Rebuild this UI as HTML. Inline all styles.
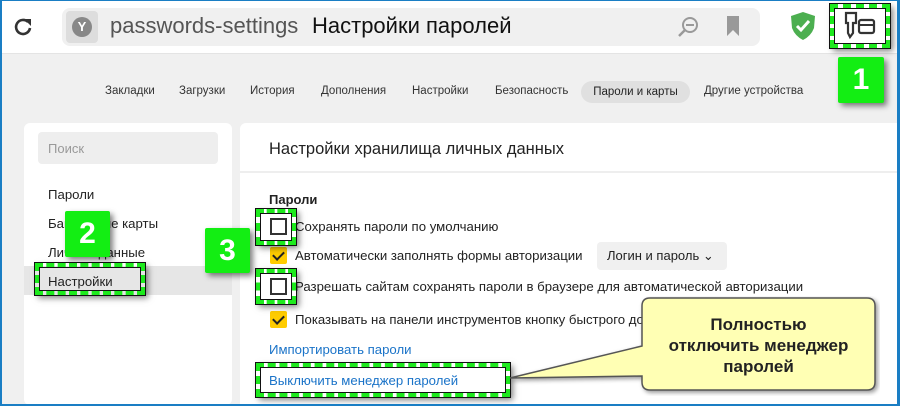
<!DOCTYPE html>
<html><head><meta charset="utf-8"><style>
*{margin:0;padding:0;box-sizing:border-box}
body{width:900px;height:406px;overflow:hidden;background:#f0f0f0;font-family:"Liberation Sans","DejaVu Sans",sans-serif;position:relative;color:#222}
.a{position:absolute;white-space:nowrap}
.frame{position:absolute;left:0;top:0;width:900px;height:406px;border:1px solid #1a7ec4;border-left-width:2px;border-right-width:3px;border-bottom-width:2px;z-index:50;pointer-events:none}
.dash{position:absolute;border:4px dashed #1eea1e;box-shadow:0 0 0 1px #111,3px 3px 6px rgba(0,0,0,.5),inset 0 0 0 1px #111;z-index:20}
.gbox{position:absolute;background:#13ee13;color:#fff;font-weight:bold;font-size:30px;text-align:center;box-shadow:3px 3px 6px rgba(0,0,0,.5);z-index:21;border-radius:2px}
.cb{position:absolute;width:17px;height:17px;background:#fc0;border-radius:2px}
.cb:after{content:"";position:absolute;left:5px;top:2px;width:5px;height:9px;border:solid #222;border-width:0 2px 2px 0;transform:rotate(45deg)}
.cbe{position:absolute;width:17px;height:17px;border:2px solid #333;background:#fff}
.t{font-size:13.2px;color:#222}
</style></head><body>
<div class="a" style="left:0;top:0;width:900px;height:54px;background:#fff;border-bottom:1px solid #e4e4e4"></div>
<svg class="a" style="left:12px;top:16px" width="22" height="22" viewBox="0 0 22 22"><path d="M16 6 A7 7 0 1 0 18 12" fill="none" stroke="#333" stroke-width="2.6"/><path d="M12 3 L19 3 L19 10 Z" fill="#333"/></svg>
<div class="a" style="left:62px;top:8px;width:698px;height:38px;background:#f0f0f0;border-radius:8px"></div>
<div class="a" style="left:66px;top:11px;width:32px;height:32px;background:#ddd;border-radius:4px"></div>
<div class="a" style="left:72px;top:17px;width:20px;height:20px;background:#888;border-radius:50%;color:#fff;font-size:13px;text-align:center;line-height:20px;font-weight:bold">Y</div>
<div class="a" style="left:110px;top:13px;font-size:22px;color:#555">passwords-settings</div>
<div class="a" style="left:312px;top:13px;font-size:22px;color:#111">Настройки паролей</div>
<svg class="a" style="left:676px;top:15px" width="24" height="24" viewBox="0 0 24 24"><circle cx="14" cy="10" r="7" fill="none" stroke="#999" stroke-width="2"/><line x1="10" y1="10" x2="18" y2="10" stroke="#999" stroke-width="2"/><line x1="9" y1="15" x2="3" y2="21" stroke="#999" stroke-width="2.5"/></svg>
<svg class="a" style="left:726px;top:16px" width="14" height="20" viewBox="0 0 14 20"><path d="M1 0H13V20L7 14L1 20Z" fill="#999"/></svg>
<svg class="a" style="left:790px;top:11px" width="26" height="30" viewBox="0 0 26 30"><path d="M13 1 L25 5 L24 17 Q21 25 13 29 Q5 25 2 17 L1 5 Z" fill="#4caf50"/><path d="M7 15 L11 19 L19 10" fill="none" stroke="#fff" stroke-width="3"/></svg>
<div class="dash" style="left:830px;top:4px;width:60px;height:44px"></div>
<svg class="a" style="left:842px;top:11px;z-index:22" width="36" height="30" viewBox="0 0 36 30"><path d="M4 2H14V12H11V22L8 26L6 22V12H4Z" fill="none" stroke="#333" stroke-width="2.2"/><rect x="17" y="9" width="15" height="13" rx="2" fill="none" stroke="#333" stroke-width="2.2"/><line x1="17" y1="14" x2="32" y2="14" stroke="#333" stroke-width="2"/></svg>
<div class="gbox" style="left:838px;top:57px;width:46px;height:46px;line-height:46px">1</div>
<div class="a" style="top:85px;left:105px;font-size:11.5px;color:#333">Закладки</div>
<div class="a" style="top:85px;left:179px;font-size:11.5px;color:#333">Загрузки</div>
<div class="a" style="top:85px;left:250px;font-size:11.5px;color:#333">История</div>
<div class="a" style="top:85px;left:321px;font-size:11.5px;color:#333">Дополнения</div>
<div class="a" style="top:85px;left:412px;font-size:11.5px;color:#333">Настройки</div>
<div class="a" style="top:85px;left:495px;font-size:11.5px;color:#333">Безопасность</div>
<div class="a" style="top:81px;left:581px;width:109px;height:22px;background:#e0e0e0;border-radius:11px;font-size:11.5px;color:#222;text-align:center;line-height:22px">Пароли и карты</div>
<div class="a" style="top:85px;left:704px;font-size:11.5px;color:#333">Другие устройства</div>
<div class="a" style="left:24px;top:123px;width:208px;height:282px;background:#fff;border-radius:6px"></div>
<div class="a" style="left:38px;top:132px;width:180px;height:32px;background:#eee;border-radius:4px;font-size:13px;color:#999;padding:9px 10px">Поиск</div>
<div class="a t" style="left:48px;top:187px">Пароли</div>
<div class="a t" style="left:48px;top:216px">Банковские карты</div>
<div class="a t" style="left:48px;top:245px">Личные данные</div>
<div class="a" style="left:24px;top:266px;width:208px;height:29px;background:#e6e6e6"></div>
<div class="a t" style="left:48px;top:274px">Настройки</div>
<div class="dash" style="left:35px;top:263px;width:110px;height:32px;background:transparent"></div>
<div class="gbox" style="left:65px;top:211px;width:45px;height:46px;line-height:46px">2</div>
<div class="a" style="left:240px;top:123px;width:660px;height:282px;background:#fff;border-radius:6px 0 0 0"></div>
<div class="a" style="left:240px;top:171px;width:660px;height:2px;background:#eee"></div>
<div class="a" style="left:269px;top:140px;font-size:16.5px;color:#222">Настройки хранилища личных данных</div>
<div class="a" style="left:269px;top:192px;font-size:13px;font-weight:bold;color:#222">Пароли</div>
<div class="cbe" style="left:270px;top:218px"></div>
<div class="a t" style="left:295px;top:219px">Сохранять пароли по умолчанию</div>
<div class="cb" style="left:270px;top:247px"></div>
<div class="a t" style="left:295px;top:248px">Автоматически заполнять формы авторизации</div>
<div class="a" style="left:597px;top:242px;width:130px;height:28px;background:#f0f0f0;border-radius:4px;font-size:13px;color:#222;padding:6px 10px">Логин и пароль ⌄</div>
<div class="cbe" style="left:270px;top:278px"></div>
<div class="a t" style="left:295px;top:279px">Разрешать сайтам сохранять пароли в браузере для автоматической авторизации</div>
<div class="cb" style="left:270px;top:311px"></div>
<div class="a t" style="left:295px;top:312px">Показывать на панели инструментов кнопку быстрого доступа</div>
<div class="a" style="left:269px;top:342px;font-size:13.2px;color:#1a73c8">Импортировать пароли</div>
<div class="a" style="left:269px;top:373px;font-size:13.2px;color:#1a73c8">Выключить менеджер паролей</div>
<div class="dash" style="left:256px;top:209px;width:40px;height:36px"></div>
<div class="dash" style="left:256px;top:269px;width:40px;height:35px"></div>
<div class="dash" style="left:256px;top:363px;width:254px;height:34px"></div>
<div class="gbox" style="left:205px;top:228px;width:45px;height:45px;line-height:45px">3</div>
<svg class="a" style="left:500px;top:296px;z-index:25" width="380" height="100" viewBox="0 0 380 100"><path d="M150 2 H367 Q375 2 375 10 V86 Q375 94 367 94 H150 Q142 94 142 86 V80 L10 82 L142 50 V10 Q142 2 150 2 Z" fill="#ffffb4" stroke="#555" stroke-width="1.5" style="filter:drop-shadow(2px 2px 2px rgba(0,0,0,.4))"/></svg>
<div class="a" style="left:642px;top:314px;width:233px;text-align:center;font-size:17px;font-weight:bold;color:#222;line-height:21px;z-index:26;white-space:normal">Полностью<br>отключить менеджер<br>паролей</div>
<div class="frame"></div>
</body></html>
